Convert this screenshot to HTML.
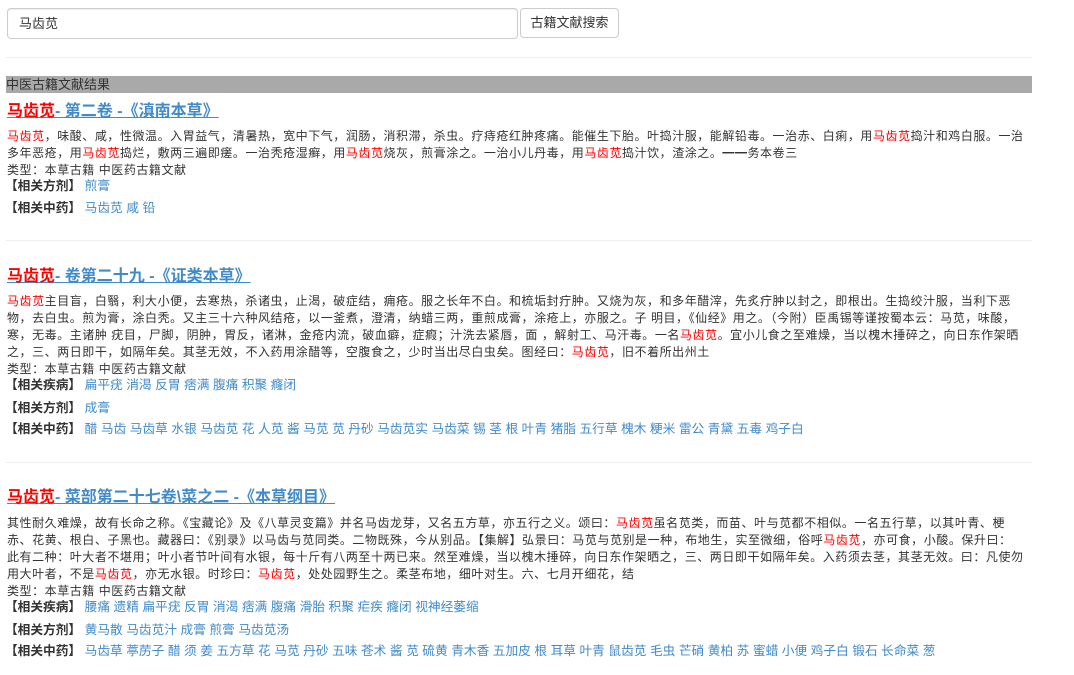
<!DOCTYPE html>
<html><head><meta charset="utf-8"><style>
body{margin:0;background:#fff;font-family:"Liberation Sans","Noto Sans CJK SC",sans-serif;color:#333;font-size:12px;}
.a{position:absolute;left:7px;white-space:nowrap;height:17px;line-height:17px;letter-spacing:0.55px}
.r{color:#f00}
.t{font-size:16px;font-weight:bold;height:22px;line-height:22px;text-decoration:underline;color:#428bca;letter-spacing:0}
.rel{font-size:12.7px;letter-spacing:0}
.rel b{color:#333;font-weight:bold;margin-left:-2px}
.rel span{color:#428bca}
.hr{position:absolute;left:6px;width:1026px;height:1px;background:#eee}
</style></head><body>
<div style="position:absolute;left:7px;top:8px;width:509px;height:29px;border:1px solid #ccc;border-radius:4px;box-shadow:inset 0 1px 1px rgba(0,0,0,.075);font-size:13px;line-height:29px;text-indent:11px;color:#333">马齿苋</div>
<div style="position:absolute;left:520px;top:8px;width:97px;height:28px;border:1px solid #ccc;border-radius:4px;font-size:13px;line-height:28px;text-align:center;color:#333">古籍文献搜索</div>
<div class="hr" style="top:57px"></div>
<div style="position:absolute;left:6px;top:76px;width:1026px;height:17px;background:#a9a9a9;line-height:17px;font-size:13px;color:#333">中医古籍文献结果</div>

<div class="a t" style="top:101px"><span class="r">马齿苋</span>- 第二卷 -《滇南本草》</div>
<div class="a" style="top:128px"><span class="r">马齿苋</span>，味酸、咸，性微温。入胃益气，清暑热，宽中下气，润肠，消积滞，杀虫。疗痔疮红肿疼痛。能催生下胎。叶捣汁服，能解铅毒。一治赤、白痢，用<span class="r">马齿苋</span>捣汁和鸡白服。一治</div>
<div class="a" style="top:145px">多年恶疮，用<span class="r">马齿苋</span>捣烂，敷两三遍即瘥。一治秃疮湿癣，用<span class="r">马齿苋</span>烧灰，煎膏涂之。一治小儿丹毒，用<span class="r">马齿苋</span>捣汁饮，渣涂之。━━务本卷三</div>
<div class="a" style="top:162px">类型：本草古籍 中医药古籍文献</div>
<div class="a rel" style="top:178px"><b>【相关方剂】</b> <span>煎膏</span></div>
<div class="a rel" style="top:200px"><b>【相关中药】</b> <span>马齿苋 咸 铅</span></div>
<div class="hr" style="top:240px"></div>

<div class="a t" style="top:266px"><span class="r">马齿苋</span>- 卷第二十九 -《证类本草》</div>
<div class="a" style="top:293px"><span class="r">马齿苋</span>主目盲，白翳，利大小便，去寒热，杀诸虫，止渴，破症结，痈疮。服之长年不白。和梳垢封疔肿。又烧为灰，和多年醋滓，先炙疔肿以封之，即根出。生捣绞汁服，当利下恶</div>
<div class="a" style="top:310px">物，去白虫。煎为膏，涂白秃。又主三十六种风结疮，以一釜煮，澄清，纳蜡三两，重煎成膏，涂疮上，亦服之。子 明目，《仙经》用之。（今附）臣禹锡等谨按蜀本云：马苋，味酸，</div>
<div class="a" style="top:327px">寒，无毒。主诸肿 疣目，尸脚，阴肿，胃反，诸淋，金疮内流，破血癖，症瘕；汁洗去紧唇，面 ，解射工、马汗毒。一名<span class="r">马齿苋</span>。宜小儿食之至难燥，当以槐木捶碎之，向日东作架晒</div>
<div class="a" style="top:344px">之，三、两日即干，如隔年矣。其茎无效，不入药用涂醋等，空腹食之，少时当出尽白虫矣。图经曰：<span class="r">马齿苋</span>，旧不着所出州土</div>
<div class="a" style="top:361px">类型：本草古籍 中医药古籍文献</div>
<div class="a rel" style="top:377px"><b>【相关疾病】</b> <span>扁平疣 消渴 反胃 痞满 腹痛 积聚 癃闭</span></div>
<div class="a rel" style="top:400px"><b>【相关方剂】</b> <span>成膏</span></div>
<div class="a rel" style="top:421px"><b>【相关中药】</b> <span>醋 马齿 马齿草 水银 马齿苋 花 人苋 酱 马苋 苋 丹砂 马齿苋实 马齿菜 锡 茎 根 叶青 猪脂 五行草 槐木 粳米 雷公 青黛 五毒 鸡子白</span></div>
<div class="hr" style="top:462px"></div>

<div class="a t" style="top:487px"><span class="r">马齿苋</span>- 菜部第二十七卷\菜之二 -《本草纲目》</div>
<div class="a" style="top:515px">其性耐久难燥，故有长命之称。《宝藏论》及《八草灵变篇》并名马齿龙芽，又名五方草，亦五行之义。颂曰：<span class="r">马齿苋</span>虽名苋类，而苗、叶与苋都不相似。一名五行草，以其叶青、梗</div>
<div class="a" style="top:532px">赤、花黄、根白、子黑也。藏器曰：《别录》以马齿与苋同类。二物既殊，今从别品。【集解】弘景曰：马苋与苋别是一种，布地生，实至微细，俗呼<span class="r">马齿苋</span>，亦可食，小酸。保升曰：</div>
<div class="a" style="top:549px">此有二种：叶大者不堪用；叶小者节叶间有水银，每十斤有八两至十两已来。然至难燥，当以槐木捶碎，向日东作架晒之，三、两日即干如隔年矣。入药须去茎，其茎无效。曰：凡使勿</div>
<div class="a" style="top:566px">用大叶者，不是<span class="r">马齿苋</span>，亦无水银。时珍曰：<span class="r">马齿苋</span>，处处园野生之。柔茎布地，细叶对生。六、七月开细花，结</div>
<div class="a" style="top:583px">类型：本草古籍 中医药古籍文献</div>
<div class="a rel" style="top:599px"><b>【相关疾病】</b> <span>腰痛 遗精 扁平疣 反胃 消渴 痞满 腹痛 滑胎 积聚 疟疾 癃闭 视神经萎缩</span></div>
<div class="a rel" style="top:622px"><b>【相关方剂】</b> <span>黄马散 马齿苋汁 成膏 煎膏 马齿苋汤</span></div>
<div class="a rel" style="top:643px"><b>【相关中药】</b> <span>马齿草 葶苈子 醋 须 姜 五方草 花 马苋 丹砂 五味 苍术 酱 苋 硫黄 青木香 五加皮 根 耳草 叶青 鼠齿苋 毛虫 芒硝 黄柏 苏 蜜蜡 小便 鸡子白 锻石 长命菜 葱</span></div>
</body></html>
